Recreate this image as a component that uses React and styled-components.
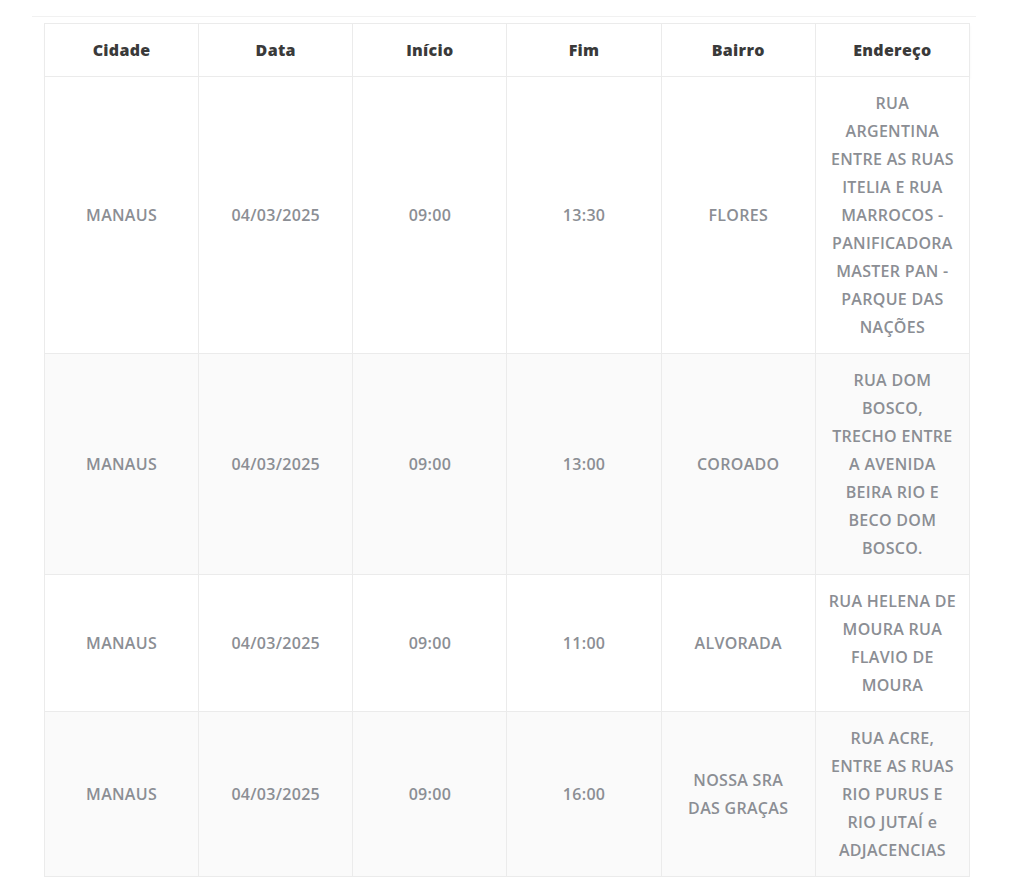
import styled, { createGlobalStyle } from "styled-components";

const GlobalStyle = createGlobalStyle`
  body {
    margin: 0;
    background: #ffffff;
    font-family: "Open Sans", "Noto Sans", sans-serif;
  }
`;

// endereco kept as lines so the wrapping follows the original column
const rows = [
  {
    cidade: "MANAUS",
    data: "04/03/2025",
    inicio: "09:00",
    fim: "13:30",
    bairro: ["FLORES"],
    endereco: [
      "RUA",
      "ARGENTINA",
      "ENTRE AS RUAS",
      "ITELIA E RUA",
      "MARROCOS -",
      "PANIFICADORA",
      "MASTER PAN -",
      "PARQUE DAS",
      "NAÇÕES",
    ],
  },
  {
    cidade: "MANAUS",
    data: "04/03/2025",
    inicio: "09:00",
    fim: "13:00",
    bairro: ["COROADO"],
    endereco: [
      "RUA DOM",
      "BOSCO,",
      "TRECHO ENTRE",
      "A AVENIDA",
      "BEIRA RIO E",
      "BECO DOM",
      "BOSCO.",
    ],
  },
  {
    cidade: "MANAUS",
    data: "04/03/2025",
    inicio: "09:00",
    fim: "11:00",
    bairro: ["ALVORADA"],
    endereco: ["RUA HELENA DE", "MOURA RUA", "FLAVIO DE", "MOURA"],
  },
  {
    cidade: "MANAUS",
    data: "04/03/2025",
    inicio: "09:00",
    fim: "16:00",
    bairro: ["NOSSA SRA", "DAS GRAÇAS"],
    endereco: [
      "RUA ACRE,",
      "ENTRE AS RUAS",
      "RIO PURUS E",
      "RIO JUTAÍ e",
      "ADJACENCIAS",
    ],
  },
];

const columns = ["Cidade", "Data", "Início", "Fim", "Bairro", "Endereço"];

// Section wrapper with the faint rule on top
const Section = styled.section`
  margin: 16px 48px 0 32px;
  border-top: 1px solid #f1f1f1;
  padding: 6px 6px 16px 12px;
`;

const Table = styled.table`
  width: 926px;
  border-collapse: collapse;
  table-layout: fixed;
`;

const HeadRow = styled.tr`
  box-shadow: 0 2px 3px rgba(0, 0, 0, 0.04);
`;

const Th = styled.th`
  border: 1px solid #ebebeb;
  padding: 12px 10px;
  font-size: 16px;
  line-height: 28px;
  font-weight: 800;
  letter-spacing: 0.3px;
  color: #3a3a3a;
  text-align: center;
`;

const Row = styled.tr`
  background: ${({ $striped }) => ($striped ? "#fafafa" : "#ffffff")};
`;

const Td = styled.td`
  border: 1px solid #ebebeb;
  padding: 12px 10px;
  font-size: 16px;
  line-height: 28px;
  font-weight: 600;
  letter-spacing: 0.3px;
  color: #8b8e94;
  text-align: center;
  vertical-align: middle;
`;

const Line = styled.span`
  display: block;
  white-space: nowrap;
`;

function Lines({ items }) {
  return items.map((t, i) => <Line key={i}>{t}</Line>);
}

export default function App() {
  return (
    <>
      <GlobalStyle />
      <Section>
        <Table>
          <thead>
            <HeadRow>
              {columns.map((c) => (
                <Th key={c}>{c}</Th>
              ))}
            </HeadRow>
          </thead>
          <tbody>
            {rows.map((r, i) => (
              <Row key={i} $striped={i % 2 === 1}>
                <Td>{r.cidade}</Td>
                <Td>{r.data}</Td>
                <Td>{r.inicio}</Td>
                <Td>{r.fim}</Td>
                <Td>
                  <Lines items={r.bairro} />
                </Td>
                <Td>
                  <Lines items={r.endereco} />
                </Td>
              </Row>
            ))}
          </tbody>
        </Table>
      </Section>
    </>
  );
}
